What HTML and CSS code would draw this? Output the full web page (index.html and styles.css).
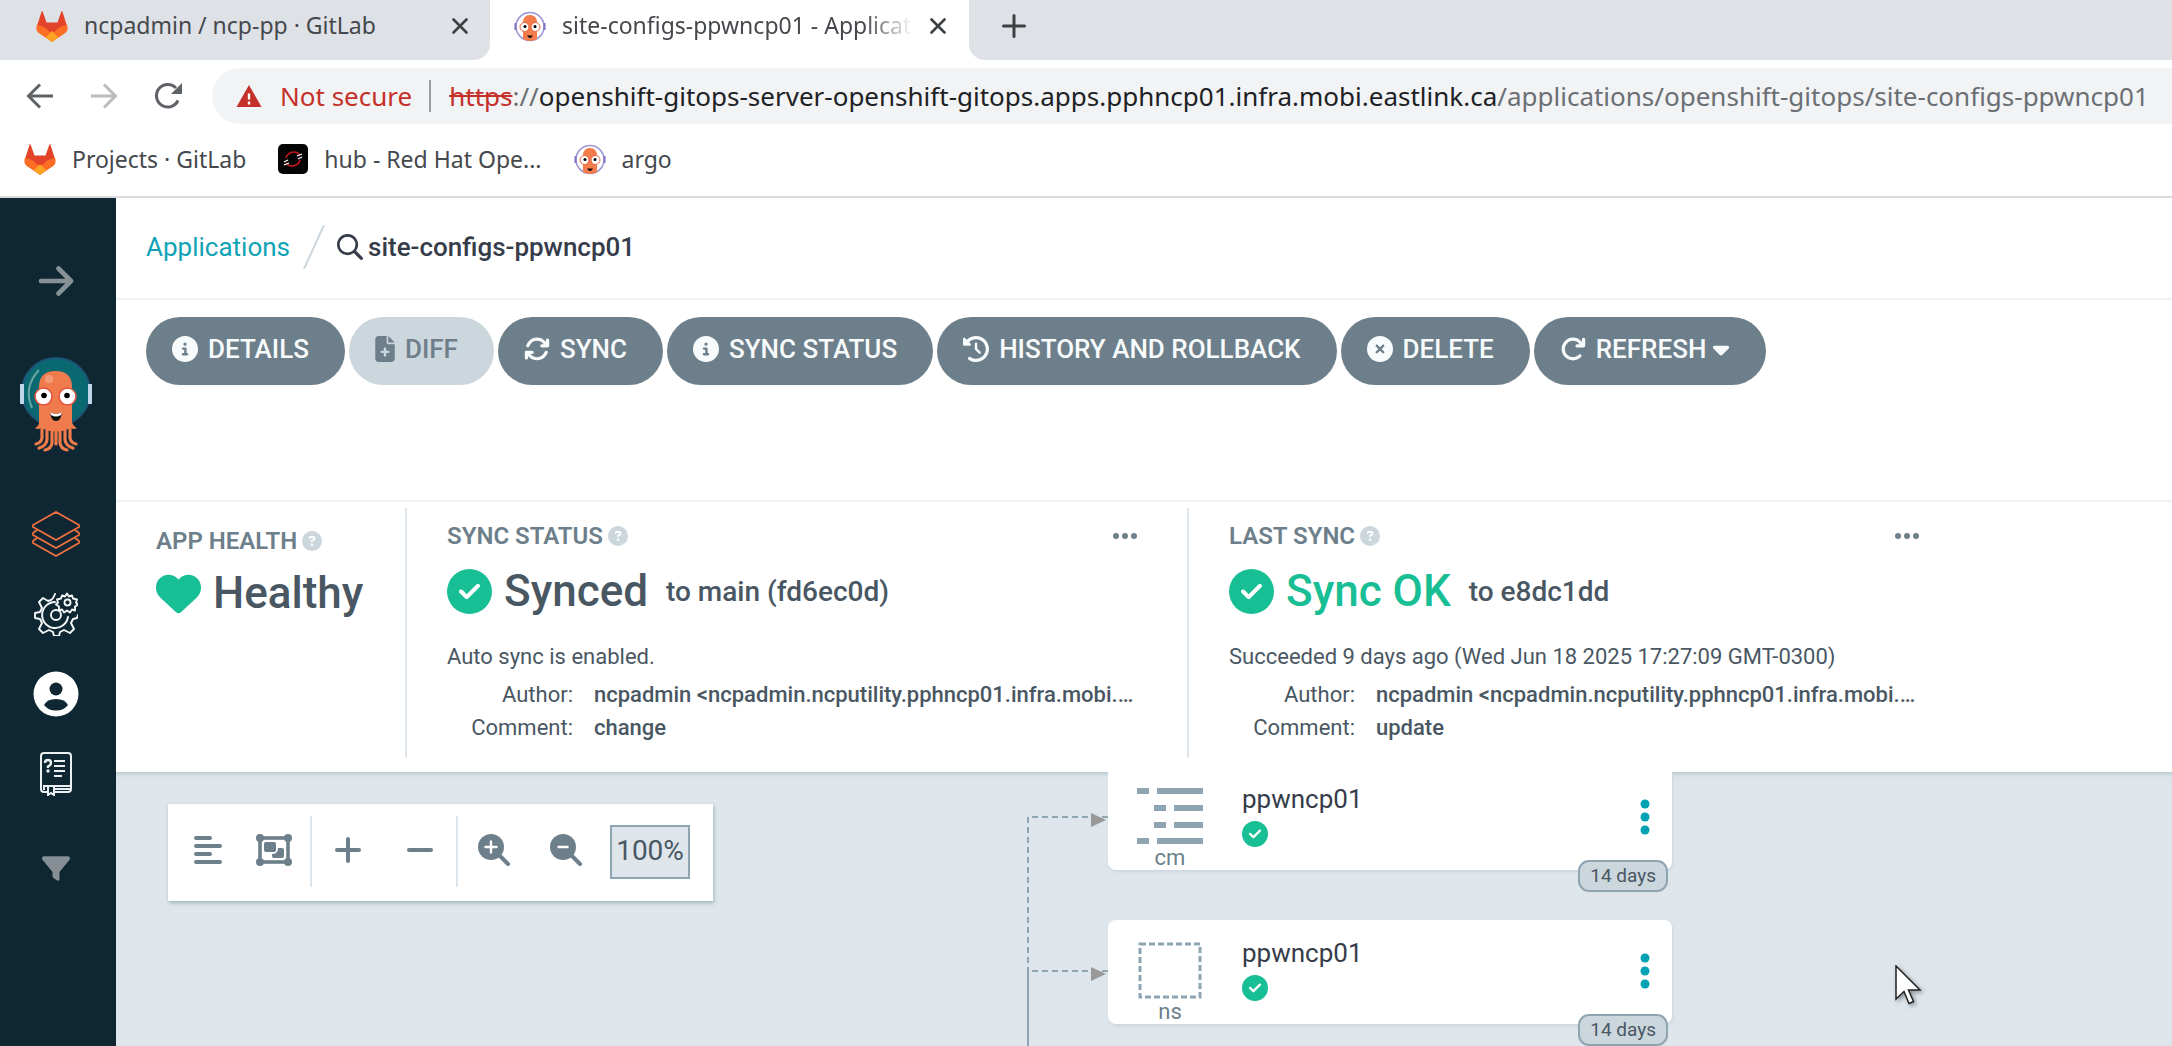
FILE: index.html
```
<!DOCTYPE html>
<html lang="en">
<head>
<meta charset="utf-8">
<title>site-configs-ppwncp01 - Applications</title>
<link rel="stylesheet" href="styles.css">
</head>
<body>
<svg class="defs" aria-hidden="true">
  <symbol id="gitlab" viewBox="0 0 32 31">
    <path fill="#e24329" d="M1 15 5.600 0.500q.5-.9 1 0L10.500 11.500h11L25.400.5q.5-.9 1 0L31 15 16 26z"/>
    <path fill="#fc6d26" d="M1 13.500 9 16.500 16 23l7-6.500 8-3q2 6-2.500 9L16 31 3.500 22.500Q-1 19.500 1 13.500z"/>
    <path fill="#fca326" d="M16 20l6.500 6.500L16 31l-6.500-4.500z"/>
  </symbol>
  <symbol id="argo-small" viewBox="0 0 32 31">
    <circle cx="16" cy="15.500" r="14" fill="#fff" stroke="#9b93d2" stroke-width="1.500"/>
    <path d="M1.500 12v7M30.500 12v7" stroke="#7f72c4" stroke-width="2"/>
    <path fill="#f47b4a" d="M9 28V12q0-8 7-8t7 8v16q-7 4-14 0z"/>
    <circle cx="10.500" cy="16" r="4.500" fill="#fff" stroke="#e9603b"/><circle cx="21.500" cy="16" r="4.500" fill="#fff" stroke="#e9603b"/>
    <circle cx="11" cy="15.500" r="1.500"/><circle cx="21" cy="15.500" r="1.500"/>
    <path d="M13 24.500h6q-3 5-6 0z" fill="#111"/>
  </symbol>
  <symbol id="close" viewBox="0 0 16 16"><path d="M1.500 1.500l13 13m0-13l-13 13" stroke="#3c4043" stroke-width="2.600" stroke-linecap="round"/></symbol>
  <symbol id="info" viewBox="0 0 512 512"><path fill-rule="evenodd" d="M256 512A256 256 0 1 0 256 0a256 256 0 1 0 0 512zM216 336h24V272H216c-13.300 0-24-10.700-24-24s10.700-24 24-24h48c13.300 0 24 10.700 24 24v88h8c13.300 0 24 10.700 24 24s-10.700 24-24 24H216c-13.300 0-24-10.700-24-24s10.700-24 24-24zm40-208a32 32 0 1 1 0 64 32 32 0 1 1 0-64z"/></symbol>
  <symbol id="check" viewBox="0 0 512 512"><path fill-rule="evenodd" d="M256 512A256 256 0 1 0 256 0a256 256 0 1 0 0 512zM369 209L241 337c-9.400 9.400-24.600 9.400-33.900 0l-64-64c-9.400-9.400-9.400-24.600 0-33.900s24.600-9.400 33.900 0l47 47L335 175c9.400-9.400 24.600-9.400 33.900 0s9.400 24.600 0 33.900z"/></symbol>
  <symbol id="question" viewBox="0 0 512 512"><path fill-rule="evenodd" d="M256 512A256 256 0 1 0 256 0a256 256 0 1 0 0 512zM169.800 165.300c7.900-22.300 29.100-37.300 52.800-37.300h58.300c34.900 0 63.100 28.300 63.100 63.100c0 22.600-12.100 43.500-31.700 54.800L280 264.400c-.2 13-10.900 23.600-24 23.600c-13.300 0-24-10.700-24-24V250.500c0-8.600 4.600-16.500 12.100-20.800l44.300-25.400c4.700-2.700 7.600-7.700 7.600-13.100c0-8.400-6.800-15.100-15.100-15.100H222.600c-3.400 0-6.400 2.100-7.500 5.300l-.4 1.200c-4.400 12.500-18.200 19-30.600 14.600s-19-18.200-14.600-30.600l.3-1.200zM224 352a32 32 0 1 1 64 0 32 32 0 1 1 -64 0z"/></symbol>
  <symbol id="dots" viewBox="0 0 24 6"><circle cx="3" cy="3" r="3"/><circle cx="12" cy="3" r="3"/><circle cx="21" cy="3" r="3"/></symbol>
</svg>

<header class="browser">
  <div class="tabs">
    <div class="tab">
      <svg class="favicon"><use href="#gitlab"/></svg>
      <span class="tab-title">ncpadmin / ncp-pp · GitLab</span>
      <button class="plain" aria-label="Close tab"><svg width="16" height="16"><use href="#close"/></svg></button>
    </div>
    <div class="tab active">
      <svg class="favicon"><use href="#argo-small"/></svg>
      <span class="tab-title faded">site-configs-ppwncp01 - Applications</span>
      <button class="plain" aria-label="Close tab"><svg width="16" height="16"><use href="#close"/></svg></button>
    </div>
    <div class="tabs-rest">
      <button class="plain" aria-label="New tab"><svg width="24" height="24" viewBox="0 0 24 24"><path d="M12 1.500v21M1.500 12h21" stroke="#3c4043" stroke-width="3" stroke-linecap="round"/></svg></button>
    </div>
  </div>
  <div class="address-row">
    <nav class="history">
      <button class="plain" aria-label="Back"><svg width="28" height="28" viewBox="0 0 28 28" fill="none" stroke="#5f6368" stroke-width="3"><path d="M27 14H3M14 2.500 2.500 14 14 25.500"/></svg></button>
      <button class="plain" aria-label="Forward"><svg width="28" height="28" viewBox="0 0 28 28" fill="none" stroke="#babcbe" stroke-width="3"><path d="M1 14h24M14 2.500 25.500 14 14 25.500"/></svg></button>
      <button class="plain" aria-label="Reload"><svg width="28" height="28" viewBox="0 0 28 28" fill="none"><path d="M24 18.500A11.300 11.300 0 1 1 22 6" stroke="#5f6368" stroke-width="3"/><path d="M28 1v11H17z" fill="#5f6368"/></svg></button>
    </nav>
    <div class="omnibox">
      <svg width="26" height="24" viewBox="0 0 26 24"><path d="M13 1l12.500 22H.5z" fill="#c5302a"/><path d="M13 9.500v6m0 2v3" stroke="#fff" stroke-width="2.400"/></svg>
      <span class="insecure">Not secure</span>
      <span class="rule"></span>
      <span class="url"><s>https</s>://<b>openshift-gitops-server-openshift-gitops.apps.pphncp01.infra.mobi.eastlink.ca</b>/applications/openshift-gitops/site-configs-ppwncp01</span>
    </div>
  </div>
  <nav class="bookmarks">
    <a href="#"><svg class="favicon"><use href="#gitlab"/></svg>Projects · GitLab</a>
    <a href="#"><svg class="hub" viewBox="0 0 30 30"><rect width="30" height="30" rx="5" fill="#050505"/><path d="M22 11A8 8 0 0 0 8 14M8 19a8 8 0 0 0 14-3" fill="none" stroke="#c9151b" stroke-width="1.600"/><path d="M19 12l5-2M20 15l4-2M6 18l4-2M6 21l5-2" stroke="#fff" stroke-width="1.200"/></svg>hub - Red Hat Ope...</a>
    <a href="#"><svg class="favicon"><use href="#argo-small"/></svg>argo</a>
  </nav>
</header>

<div class="app">
  <nav class="sidebar">
    <a href="#" class="side-arrow" aria-label="Expand"><svg width="36" height="30" viewBox="0 0 36 30" fill="none" stroke="#879297" stroke-width="4.600" stroke-linecap="round" stroke-linejoin="round"><path d="M3 15h30M20.500 2.500 33 15 20.500 27.500"/></svg></a>
    <a href="#" class="side-logo" aria-label="Argo"><svg width="74" height="96" viewBox="0 0 74 96">
      <circle cx="37" cy="35" r="34" fill="#0a6870" stroke="#1d5578" stroke-width="2"/>
      <path d="M13 51Q4 30 20 13" fill="none" stroke="#6aa5a6" stroke-width="2"/>
      <rect x="1" y="27" width="4" height="20" fill="#bcd6ea"/><rect x="69" y="27" width="4" height="20" fill="#bcd6ea"/>
      <path fill="#ef7b4d" d="M20 30Q20 14 36.500 14T53 30v35q1 4 5 6-4 2-6 0-15 7-30 0-3 2-6 0 4-2 4-6z"/>
      <g fill="none" stroke="#ef7b4d" stroke-width="3.200" stroke-linecap="round"><path d="M23 68v13q-1 5-6 6"/><path d="M28 69v14q-1 6-8 8"/><path d="M33 69v17q-1 6-7 7"/><path d="M37 69v18"/><path d="M41 69v17q1 6 7 7"/><path d="M46 69v14q1 6 8 8"/><path d="M51 68v13q1 5 6 6"/></g>
      <circle cx="30" cy="22" r="4" fill="#f49a79"/>
      <circle cx="24.500" cy="39.500" r="8.500" fill="#fff" stroke="#e2533a" stroke-width="1.500"/><circle cx="48.500" cy="39.500" r="8.500" fill="#fff" stroke="#e2533a" stroke-width="1.500"/>
      <circle cx="25" cy="38.500" r="2.800"/><circle cx="48" cy="38.500" r="2.800"/>
      <path d="M31 55q6 4 12 0-1 9-6 9t-6-9z" fill="#111"/><path d="M31 55q6 4 12 0l-1 3q-5 3-10 0z" fill="#fff"/>
    </svg></a>
    <a href="#" class="side-apps" aria-label="Applications"><svg width="50" height="46" viewBox="0 0 50 46" fill="none" stroke="#f0713f" stroke-width="1.800" stroke-linejoin="round"><path d="M25 1 48 14v2L25 29 2 16v-2zM6 19l-4 3v2l23 13 23-13v-2l-4-3M6 27l-4 3v2l23 13 23-13v-2l-4-3"/></svg></a>
    <a href="#" class="side-item" aria-label="Settings"><svg width="44" height="44" viewBox="0 0 44 44" fill="none" stroke="#f4f7f8" stroke-width="1.900" stroke-linejoin="round" stroke-linecap="round">
      <path d="M21 2q-2 5-4 6l-3 1-5-3-4 4 3 6-2 4-5 1v5l5 1 2 4-3 6 4 4 6-3 4 2 1 4h5l1-4 4-2 6 3 4-4-3-6 2-4 4-1 1-3"/>
      <path d="M21 10a13 13 0 1 0 13 15"/><circle cx="22" cy="23" r="5"/>
      <path d="M33 1.500l2 3 3-1 1 3 4 1-1 3 2 2-3 2v4l-3-1-2 3-3-2-3 2-2-3-3 1v-4l-3-2 2-2-1-3 4-1 1-3 3 1z"/><circle cx="33.500" cy="10.500" r="3"/></svg></a>
    <a href="#" class="side-item" aria-label="User"><svg width="46" height="46" viewBox="0 0 46 46"><circle cx="23" cy="23" r="22.500" fill="#fff"/><circle cx="23" cy="18" r="6.500" fill="#0f2733"/><path d="M11 34q3-6 12-6t12 6q-4 5.500-12 5.500T11 34z" fill="#0f2733"/></svg></a>
    <a href="#" class="side-item" aria-label="Documentation"><svg width="34" height="44" viewBox="0 0 34 44" fill="none" stroke="#eaf0f2" stroke-width="2"><path d="M8 40H5q-3 0-3-3V4q0-3 3-3h24q3 0 3 3v33q0 3-3 3H15M5 38v-4h27M16 37h15M9 34v9l3-2 3 2v-9"/><path d="M15 9h11M15 14h11M15 19h11M15 24h8"/><path d="M6 11q0-3 3-3t3 3q0 2-3 3.500v1.500" stroke-width="2.400"/><circle cx="9" cy="19" r="1" fill="#eaf0f2" stroke-width="1.400"/></svg></a>
    <a href="#" class="side-filter" aria-label="Filter"><svg width="28" height="25" viewBox="0 32 512 450" fill="#868f95"><path d="M3.900 54.900C10.500 40.900 24.500 32 40 32H472c15.500 0 29.500 8.900 36.100 22.900s4.600 30.500-5.200 42.500L320 320.900V448c0 12.100-6.800 23.200-17.700 28.600s-23.800 4.300-33.500-3l-64-48c-8.100-6-12.800-15.500-12.800-25.600V320.900L9 97.300C-.7 85.400-2.800 68.800 3.900 54.900z"/></svg></a>
  </nav>

  <main class="main">
    <div class="breadcrumb">
      <a href="#">Applications</a>
      <svg width="22" height="44" viewBox="0 0 22 44"><path d="M21 0 1 44" stroke="#ccd6dd" stroke-width="2"/></svg>
      <svg class="search" width="26" height="26" viewBox="0 0 512 512" fill="#363c4a"><path fill-rule="evenodd" d="M416 208c0 45.900-14.900 88.300-40 122.700L502.600 457.400c12.500 12.500 12.500 32.800 0 45.300s-32.800 12.500-45.300 0L330.700 376c-34.400 25.200-76.800 40-122.700 40C93.100 416 0 322.900 0 208S93.100 0 208 0S416 93.100 416 208zM208 364a156 156 0 1 0 0-312 156 156 0 1 0 0 312z"/></svg>
      <span>site-configs-ppwncp01</span>
    </div>
    <div class="actions">
      <button class="action"><svg><use href="#info"/></svg>DETAILS</button>
      <button class="action" disabled><svg class="narrow" viewBox="0 0 384 512"><path fill-rule="evenodd" d="M64 0C28.700 0 0 28.700 0 64V448c0 35.300 28.700 64 64 64H320c35.300 0 64-28.700 64-64V160H256c-17.700 0-32-14.300-32-32V0H64zM256 0V128H384L256 0zM168 232q24-20 48 0v56h56q20 24 0 48h-56v56q-24 20-48 0v-56h-56q-20-24 0-48h56z"/></svg>DIFF</button>
      <button class="action"><svg viewBox="0 0 512 512"><path d="M105.100 202.600c7.700-21.800 20.200-42.300 37.800-59.800c62.500-62.500 163.800-62.500 226.300 0L386.300 160H352c-17.700 0-32 14.300-32 32s14.300 32 32 32H463.900c17.700 0 32-14.300 32-32V80c0-17.700-14.300-32-32-32s-32 14.300-32 32v35.200L414.400 97.600c-87.500-87.500-229.300-87.500-316.800 0C73.200 122 55.600 150.700 44.800 181.400c-5.900 16.700 2.900 34.900 19.500 40.800s34.900-2.900 40.800-19.500zM39 289.300c-5 1.500-9.800 4.200-13.700 8.200c-4 4-6.700 8.800-8.100 14c-.3 1.200-.6 2.500-.8 3.800c-.3 1.700-.4 3.400-.4 5.100V432c0 17.700 14.300 32 32 32s32-14.300 32-32V396.900l17.600 17.500c87.500 87.400 229.300 87.400 316.700 0c24.400-24.400 42.100-53.100 52.900-83.700c5.900-16.700-2.900-34.900-19.500-40.800s-34.900 2.900-40.800 19.500c-7.700 21.800-20.200 42.300-37.800 59.800c-62.500 62.500-163.800 62.500-226.300 0l-.1-.1L125.600 352H160c17.700 0 32-14.300 32-32s-14.300-32-32-32H48.400c-1.600 0-3.200 .1-4.800 .3s-3.100 .5-4.600 1z"/></svg>SYNC</button>
      <button class="action"><svg><use href="#info"/></svg>SYNC STATUS</button>
      <button class="action"><svg viewBox="0 0 512 512"><path d="M75 75L41 41C25.900 25.900 0 36.600 0 57.900V168c0 13.300 10.700 24 24 24H134.100c21.400 0 32.100-25.900 17-41l-30.800-30.800C155 85.500 203 64 256 64c106 0 192 86 192 192s-86 192-192 192c-40.800 0-78.600-12.700-109.700-34.400c-14.500-10.100-34.400-6.600-44.600 7.900s-6.600 34.400 7.900 44.600C151.200 495 201.700 512 256 512c141.400 0 256-114.600 256-256S397.400 0 256 0C185.300 0 121.300 28.700 75 75zm181 53c-13.300 0-24 10.700-24 24V256c0 6.400 2.500 12.500 7 17l72 72c9.400 9.400 24.600 9.400 33.900 0s9.400-24.600 0-33.900l-65-65V152c0-13.300-10.700-24-24-24z"/></svg>HISTORY AND ROLLBACK</button>
      <button class="action"><svg viewBox="0 0 512 512"><path fill-rule="evenodd" d="M256 512A256 256 0 1 0 256 0a256 256 0 1 0 0 512zM175 175c9.400-9.400 24.600-9.400 33.900 0l47 47 47-47c9.400-9.400 24.600-9.400 33.900 0s9.400 24.600 0 33.900l-47 47 47 47c9.400 9.400 9.400 24.600 0 33.900s-24.600 9.400-33.900 0l-47-47-47 47c-9.400 9.400-24.600 9.400-33.900 0s-9.400-24.600 0-33.900l47-47-47-47c-9.400-9.400-9.400-24.600 0-33.900z"/></svg>DELETE</button>
      <button class="action"><svg viewBox="0 0 512 512"><path d="M386.300 160H336c-17.700 0-32 14.300-32 32s14.300 32 32 32H464c17.700 0 32-14.300 32-32V64c0-17.700-14.300-32-32-32s-32 14.300-32 32v51.200L414.400 97.600c-87.500-87.500-229.300-87.500-316.800 0s-87.500 229.300 0 316.800s229.300 87.500 316.800 0c12.500-12.500 12.500-32.800 0-45.300s-32.800-12.500-45.300 0c-62.500 62.500-163.800 62.500-226.300 0s-62.500-163.800 0-226.300s163.800-62.500 226.300 0L386.300 160z"/></svg>REFRESH<svg class="caret" viewBox="0 0 320 512"><path d="M137.400 374.600c12.500 12.500 32.800 12.500 45.300 0l128-128c9.200-9.200 11.900-22.900 6.900-34.900s-16.600-19.800-29.600-19.800L32 192c-12.900 0-24.600 7.800-29.600 19.800s-2.200 25.700 6.900 34.900l128 128z"/></svg></button>
    </div>

    <div class="status">
      <section class="panel health">
        <h2>APP HEALTH<svg class="help"><use href="#question"/></svg></h2>
        <div class="value"><svg class="mark" viewBox="0 0 512 512"><path d="M47.600 300.400L228.300 469.100c7.500 7 17.400 10.900 27.700 10.900s20.200-3.900 27.700-10.900L464.400 300.400c30.400-28.300 47.600-68 47.600-109.500v-5.800c0-69.900-50.500-129.500-119.400-141C347 36.500 300.600 51.400 268 84L256 96 244 84c-32.600-32.600-79-47.500-124.600-39.900C50.500 55.600 0 115.200 0 185.100v5.800c0 41.500 17.200 81.200 47.600 109.500z"/></svg>Healthy</div>
      </section>
      <section class="panel sync">
        <h2>SYNC STATUS<svg class="help"><use href="#question"/></svg><button class="plain more" aria-label="More"><svg width="24" height="6"><use href="#dots"/></svg></button></h2>
        <div class="value"><svg class="mark"><use href="#check"/></svg>Synced<span class="revision">to main (fd6ec0d)</span></div>
        <p>Auto sync is enabled.</p>
        <dl><dt>Author:</dt><dd>ncpadmin &lt;ncpadmin.ncputility.pphncp01.infra.mobi.eastlink.ca&gt;</dd><dt>Comment:</dt><dd>change</dd></dl>
      </section>
      <section class="panel sync">
        <h2>LAST SYNC<svg class="help"><use href="#question"/></svg><button class="plain more" aria-label="More"><svg width="24" height="6"><use href="#dots"/></svg></button></h2>
        <div class="value"><svg class="mark"><use href="#check"/></svg><span class="ok">Sync OK</span><span class="revision">to e8dc1dd</span></div>
        <p>Succeeded 9 days ago (Wed Jun 18 2025 17:27:09 GMT-0300)</p>
        <dl><dt>Author:</dt><dd>ncpadmin &lt;ncpadmin.ncputility.pphncp01.infra.mobi.eastlink.ca&gt;</dd><dt>Comment:</dt><dd>update</dd></dl>
      </section>
    </div>

    <div class="canvas">
      <svg class="edges" width="84" height="276" viewBox="0 0 84 276" fill="none" stroke="#8fa4b1" stroke-width="2">
        <path d="M82 45H2v154" stroke-dasharray="6 4"/><path d="M82 199H2" stroke-dasharray="6 4"/><path d="M2 199v77"/>
        <path d="M65 41v14l15-7zM65 195v14l15-7z" fill="#999" stroke="none"/>
      </svg>
      <article class="node node-cm">
        <div class="kind"><svg width="66" height="58" viewBox="0 0 66 58" fill="#8fa4b1"><path d="M0 0h12v6H0zM20 0h46v6H20zM17 17h12v6H17zM37 17h29v6H37zM17 34h12v6H17zM37 34h29v6H37zM0 50h12v6H0zM20 50h46v6H20z"/></svg>cm</div>
        <div class="info"><span>ppwncp01</span><svg><use href="#check"/></svg></div>
        <button class="plain menu" aria-label="Menu"><svg width="10" height="36" viewBox="0 0 10 36" fill="#00a2b3"><circle cx="5" cy="5" r="4.500"/><circle cx="5" cy="18" r="4.500"/><circle cx="5" cy="31" r="4.500"/></svg></button>
        <span class="age">14 days</span>
      </article>
      <article class="node node-ns">
        <div class="kind"><svg width="66" height="58" viewBox="0 0 66 58"><rect x="3" y="2" width="60" height="53" fill="none" stroke="#8fa4b1" stroke-width="3" stroke-dasharray="6 3"/></svg>ns</div>
        <div class="info"><span>ppwncp01</span><svg><use href="#check"/></svg></div>
        <button class="plain menu" aria-label="Menu"><svg width="10" height="36" viewBox="0 0 10 36" fill="#00a2b3"><circle cx="5" cy="5" r="4.500"/><circle cx="5" cy="18" r="4.500"/><circle cx="5" cy="31" r="4.500"/></svg></button>
        <span class="age">14 days</span>
      </article>

      <div class="graph-tools">
        <div class="tool-group first">
          <button class="plain" aria-label="Compact"><svg width="28" height="28" viewBox="0 0 28 28" stroke-width="4" stroke-linecap="round"><path d="M2 2h14M2 10h24M2 18h14M2 26h24"/></svg></button>
          <button class="plain" aria-label="Group"><svg width="36" height="32" viewBox="0 0 36 32"><rect x="4" y="4" width="28" height="24" fill="none" stroke-width="3.600"/><g stroke="none"><circle cx="4" cy="4" r="4"/><circle cx="32" cy="4" r="4"/><circle cx="4" cy="28" r="4"/><circle cx="32" cy="28" r="4"/><rect x="8" y="8" width="12" height="10" rx="2"/><path d="M22 14h4q2 0 2 2v6q0 2-2 2h-8q-2 0-2-2v-2q6 0 6-6z"/></g></svg></button>
        </div>
        <div class="tool-group second">
          <button class="plain" aria-label="Add"><svg width="26" height="26" viewBox="0 0 26 26" stroke-width="4" stroke-linecap="round"><path d="M13 2v22M2 13h22"/></svg></button>
          <button class="plain" aria-label="Remove"><svg width="26" height="26" viewBox="0 0 26 26" stroke-width="4" stroke-linecap="round"><path d="M2 13h22"/></svg></button>
        </div>
        <div class="tool-group third">
          <button class="plain" aria-label="Zoom in"><svg width="32" height="32" viewBox="0 0 32 32"><circle cx="13" cy="13" r="13" stroke="none"/><path d="M18 18l12 12" stroke-width="4" stroke-linecap="round"/><path d="M13 7.500v11M7.500 13h11" stroke="#fff" stroke-width="2.400" stroke-linecap="round"/></svg></button>
          <button class="plain" aria-label="Zoom out"><svg width="32" height="32" viewBox="0 0 32 32"><circle cx="13" cy="13" r="13" stroke="none"/><path d="M18 18l12 12" stroke-width="4" stroke-linecap="round"/><path d="M8.500 13h9" stroke="#fff" stroke-width="2.400" stroke-linecap="round"/></svg></button>
          <input class="zoom" type="text" value="100%" aria-label="Zoom level">
        </div>
      </div>
      <svg class="cursor" width="32" height="44" viewBox="0 0 32 44"><path d="M1 1v33l8-7.500 5 12 4.500-2-5-11.500H25z" fill="#fff" stroke="#222" stroke-width="1.500"/></svg>
    </div>
  </main>
</div>
</body>
</html>
```
FILE: styles.css
```
* { box-sizing: border-box; }
body {
  margin: 0;
  min-height: 100vh;
  display: flex;
  flex-direction: column;
  background: #fff;
  color: #495763;
  font-family: Roboto, "Liberation Sans", sans-serif;
}
svg { display: block; flex: none; }
a { color: inherit; text-decoration: none; }
h2, p, dl, dd { margin: 0; }
.defs { position: absolute; width: 0; height: 0; }
.plain { display: block; flex: none; padding: 0; border: 0; background: none; }

/* browser window */
.browser {
  border-bottom: 2px solid #dadadb;
  font-family: "Noto Sans", "Open Sans", sans-serif;
  color: #45484c;
}
.favicon { width: 32px; height: 31px; }
.tabs { display: flex; height: 60px; background: #fff; font-size: 23px; }
.tab {
  display: flex;
  align-items: center;
  width: 490px;
  padding: 0 22px 8px 36px;
  background: #dee1e6;
  border-bottom-right-radius: 16px;
}
.tab.active { width: 479px; padding: 0 23px 8px 24px; background: #fff; }
.tab-title { flex: 1; min-width: 0; margin: 0 17px 0 16px; padding-bottom: 2px; overflow: hidden; white-space: nowrap; }
.faded { mask-image: linear-gradient(to right, #000 86%, transparent 100%); }
.tabs-rest { flex: 1; padding: 14px 33px; background: #dee1e6; border-bottom-left-radius: 16px; }
.address-row { display: flex; align-items: center; padding: 8px 0; }
.history { display: flex; gap: 36px; padding: 0 30px 0 26px; }
.omnibox {
  flex: 1;
  min-width: 0;
  display: flex;
  align-items: center;
  height: 56px;
  padding-left: 24px;
  border-radius: 28px 0 0 28px;
  background: #f1f3f4;
  font-size: 26px;
  white-space: nowrap;
  overflow: hidden;
}
.insecure { margin: 0 17px 0 18px; color: #c5302a; }
.rule { flex: none; width: 2px; height: 32px; margin-right: 18px; background: #9a9da1; }
.url { color: #6b6f74; }
.url s { color: #c5302a; }
.url b { color: #202124; font-weight: 400; }
.bookmarks { display: flex; align-items: center; gap: 32px; height: 64px; padding: 0 24px 10px; font-size: 23px; }
.bookmarks a { display: flex; align-items: center; gap: 16px; }
.hub { width: 30px; height: 30px; }

/* application frame */
.app { flex: 1; display: flex; }
.sidebar {
  flex: none;
  display: flex;
  flex-direction: column;
  align-items: center;
  width: 116px;
  padding: 68px 4px 0 0;
  background: #0f2733;
}
.side-logo { margin-top: 61px; }
.side-apps { margin-top: 58px; }
.side-item { margin-top: 35px; }
.side-filter { margin-top: 60px; }
.main { flex: 1; min-width: 0; display: flex; flex-direction: column; }
.breadcrumb {
  display: flex;
  align-items: center;
  height: 102px;
  padding: 0 30px 2px;
  border-bottom: 2px solid #edf2f6;
  font-size: 26px;
  font-weight: 500;
  color: #363c4a;
}
.breadcrumb a { margin-right: 13px; color: #0fa3b5; font-weight: 400; }
.search { margin: 0 5px 0 12px; }
.actions { display: flex; flex-wrap: wrap; align-content: flex-start; gap: 4px; min-height: 202px; padding: 17px 30px; border-bottom: 2px solid #edf2f6; }
.action {
  display: flex;
  align-items: center;
  gap: 10px;
  height: 68px;
  padding: 0 36px 4px 26px;
  border: 0;
  border-radius: 34px;
  background: #6d7f8b;
  color: #f8fbfc;
  fill: currentColor;
  font: 500 26px Roboto, sans-serif;
}
.action svg { width: 26px; height: 26px; }
.action svg.narrow { width: 20px; }
.action svg.caret { width: 18px; margin-left: -4px; }
.action:disabled { background: #ccd6dd; color: #6d7f8b; }

/* status panels */
.status { display: flex; min-height: 270px; padding: 6px 0 14px; }
.panel h2 { display: flex; align-items: center; height: 28px; color: #6d7f8b; font-size: 24px; font-weight: 600; }
.health { flex: none; width: 289px; padding: 19px 0 0 40px; }
.sync { flex: 0 1 782px; min-width: 0; padding: 14px 40px 0; border-left: 2px solid #dee6eb; }
.help { width: 20px; height: 20px; margin-left: 5px; fill: #ccd6dd; }
.more { margin: 0 10px 0 auto; fill: #6d7f8b; }
.value { display: flex; align-items: center; height: 46px; margin-top: 18px; font-size: 44px; font-weight: 500; white-space: nowrap; }
.health .value { margin-top: 15px; }
.mark { width: 45px; height: 45px; margin-right: 12px; fill: #18be94; }
.ok { color: #18be94; }
.revision { margin-left: 18px; font-size: 28px; }
.sync p { margin: 26px 0 5px; font-size: 22px; line-height: 33px; }
.sync dl { display: grid; grid-template-columns: 126px 1fr; column-gap: 21px; font-size: 22px; line-height: 33px; }
.sync dt { text-align: right; }
.sync dd { min-width: 0; padding-right: 8px; overflow: hidden; text-overflow: ellipsis; white-space: nowrap; font-weight: 500; }

/* resource graph */
.canvas { flex: 1; position: relative; overflow: hidden; background: #dee6ec; box-shadow: inset 0 5px 4px -3px #b9c6cd; }
.canvas > * { position: absolute; }
.edges { left: 910px; top: 0; }
.node {
  left: 992px;
  width: 564px;
  height: 104px;
  display: flex;
  padding: 22px 22px 0 29px;
  border-radius: 8px;
  background: #fff;
  box-shadow: 1px 2px 3px #ccd6dd;
}
.node-cm { top: -6px; }
.node-ns { top: 148px; }
.kind { display: flex; flex-direction: column; align-items: center; width: 66px; color: #6d7f8b; font-size: 22px; line-height: 24px; }
.info { flex: 1; margin: -4px 0 0 39px; color: #363c4a; font-size: 26px; line-height: 30px; }
.info svg { width: 26px; height: 26px; margin-top: 7px; fill: #18be94; }
.menu { align-self: flex-start; margin-top: 11px; }
.age {
  position: absolute;
  right: 4px;
  bottom: -22px;
  padding: 0 10px;
  border: 2px solid #8fa4b1;
  border-radius: 11px;
  background: #ccd6dd;
  font-size: 19px;
  line-height: 28px;
}
.graph-tools {
  left: 52px;
  top: 32px;
  display: flex;
  align-items: center;
  height: 97px;
  padding: 0 23px 2px 26px;
  background: #fff;
  box-shadow: 1px 2px 4px #9fb3bc;
  fill: #6d7f8b;
  stroke: #6d7f8b;
}
.tool-group { display: flex; align-items: center; height: 71px; }
.tool-group > button { margin-bottom: 4px; }
.first { gap: 34px; padding-right: 18px; }
.second { gap: 46px; padding: 0 23px; border: solid #dee6ec; border-width: 0 2px; }
.third { gap: 40px; padding-left: 20px; }
.zoom {
  width: 80px;
  height: 54px;
  margin-left: -12px;
  padding: 0 0 2px;
  border: 2px solid #8fa4b1;
  border-radius: 0;
  background: #dee6ec;
  color: #495763;
  font: 28px Roboto, sans-serif;
  text-align: center;
}
.cursor { left: 1779px; top: 193px; filter: drop-shadow(2px 2px 2px #8a9499); }
```
